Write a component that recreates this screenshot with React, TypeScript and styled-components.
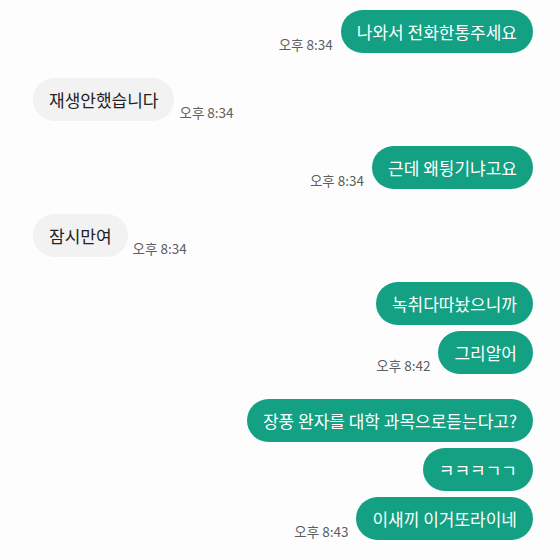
import React from "react";
import styled, { createGlobalStyle } from "styled-components";

const GlobalStyle = createGlobalStyle`
  html, body {
    margin: 0;
    padding: 0;
    background: #fdfdfd;
  }
  body {
    font-family: "Noto Sans CJK KR", "Noto Sans", sans-serif;
  }
`;

type Side = "me" | "them";

interface Message {
  text: string;
}

interface Group {
  side: Side;
  time: string;
  messages: Message[];
}

const groups: Group[] = [
  { side: "me", time: "오후 8:34", messages: [{ text: "나와서 전화한통주세요" }] },
  { side: "them", time: "오후 8:34", messages: [{ text: "재생안했습니다" }] },
  { side: "me", time: "오후 8:34", messages: [{ text: "근데 왜튕기냐고요" }] },
  { side: "them", time: "오후 8:34", messages: [{ text: "잠시만여" }] },
  {
    side: "me",
    time: "오후 8:42",
    messages: [{ text: "녹취다따놨으니까" }, { text: "그리알어" }],
  },
  {
    side: "me",
    time: "오후 8:43",
    messages: [
      { text: "장풍 완자를 대학 과목으로듣는다고?" },
      { text: "ㅋㅋㅋㄱㄱ" },
      { text: "이새끼 이거또라이네" },
    ],
  },
];

const Chat = styled.div`
  display: flex;
  flex-direction: column;
  gap: 25px;
  padding: 10px 26px 10px 33px;
`;

const GroupBox = styled.div`
  display: flex;
  flex-direction: column;
  gap: 6px;
`;

const Row = styled.div<{ $side: Side }>`
  display: flex;
  align-items: flex-end;
  justify-content: ${(p) => (p.$side === "me" ? "flex-end" : "flex-start")};
  gap: ${(p) => (p.$side === "me" ? "8px" : "5px")};
`;

const Bubble = styled.div<{ $side: Side }>`
  height: 43px;
  box-sizing: border-box;
  padding: 0 16px;
  border-radius: 22px;
  display: flex;
  align-items: center;
  font-size: 17px;
  white-space: nowrap;
  background: ${(p) => (p.$side === "me" ? "#13a083" : "#f2f2f2")};
  color: ${(p) => (p.$side === "me" ? "#ffffff" : "#222222")};
`;

const Time = styled.span`
  font-size: 13.5px;
  color: #5e5e5e;
  line-height: 1;
  margin-bottom: 2px;
  white-space: nowrap;
`;

export default function App() {
  return (
    <>
      <GlobalStyle />
      <Chat>
        {groups.map((g, gi) => (
          <GroupBox key={gi}>
            {g.messages.map((m, mi) => {
              const last = mi === g.messages.length - 1;
              const time = last ? <Time>{g.time}</Time> : null;
              return (
                <Row key={mi} $side={g.side}>
                  {g.side === "me" && time}
                  <Bubble $side={g.side}>{m.text}</Bubble>
                  {g.side === "them" && time}
                </Row>
              );
            })}
          </GroupBox>
        ))}
      </Chat>
    </>
  );
}
